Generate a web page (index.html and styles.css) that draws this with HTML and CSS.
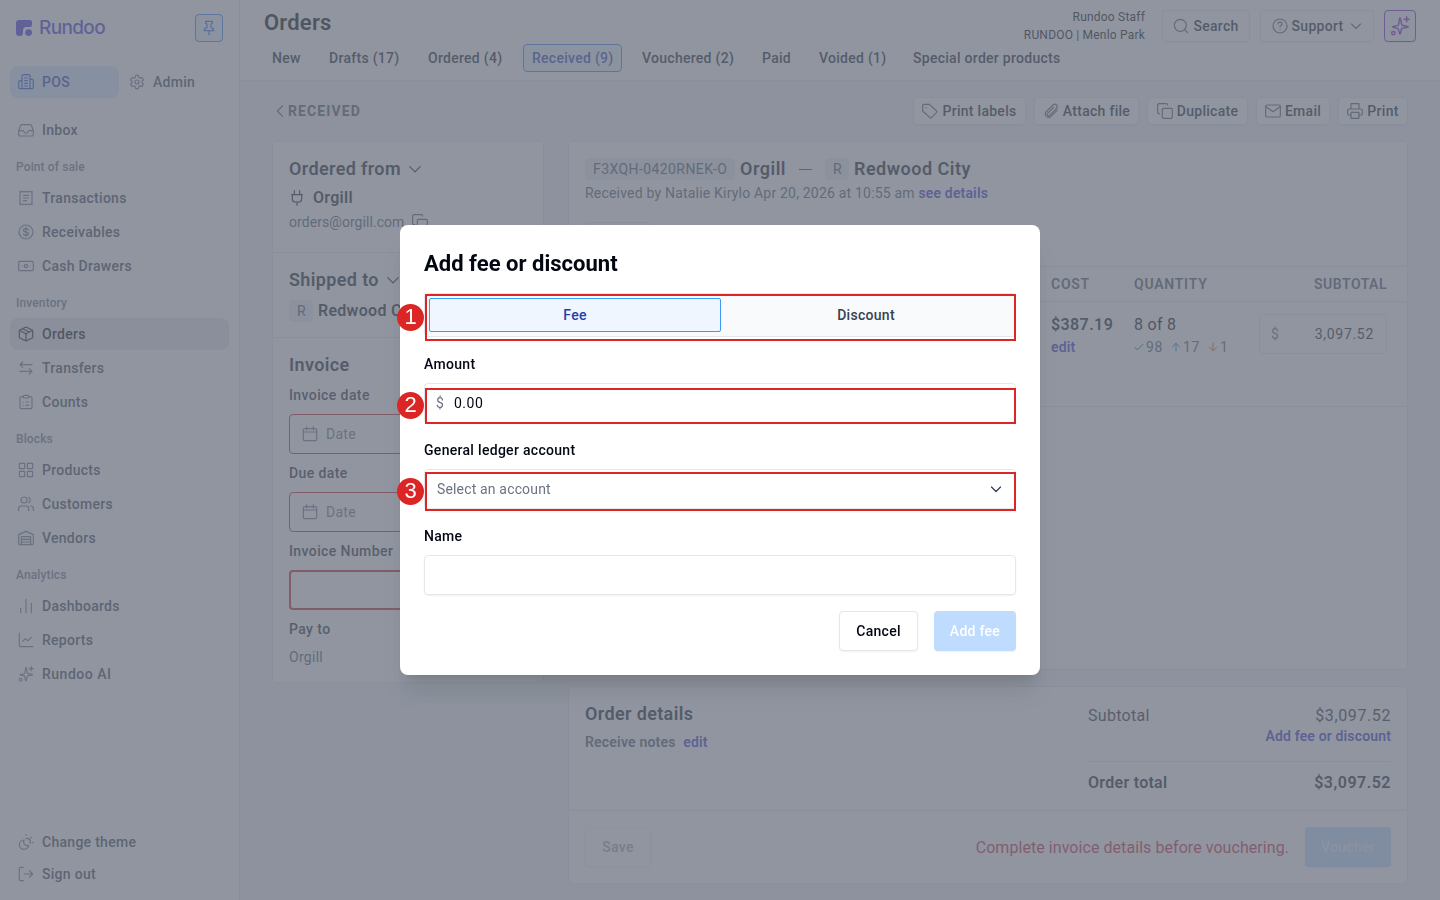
FILE: index.html
```html
<!DOCTYPE html>
<html lang="en">
<head>
  <meta charset="UTF-8" />
  <meta name="viewport" content="width=device-width, initial-scale=1.0"/>
  <title>Rundoo - Orders</title>
  <link rel="stylesheet" href="styles.css">
</head>
<body>

  <!-- Icon set -->
  <svg class="sprite" xmlns="http://www.w3.org/2000/svg">
    <symbol id="i-pin" viewBox="0 0 24 24"><path d="M7 2h10v3l-2 1v5l4 3v2H5v-2l4-3V6L7 5zM12 16v6"/></symbol>
    <symbol id="i-building" viewBox="0 0 24 24"><path d="M6 22V3a2 2 0 0 1 2-2h8a2 2 0 0 1 2 2v19M6 10H3a2 2 0 0 0-2 2v8a2 2 0 0 0 2 2h18a2 2 0 0 0 2-2V10a2 2 0 0 0-2-2h-3M10 6h4M10 10h4M10 14h4M10 18h4"/></symbol>
    <symbol id="i-gear" viewBox="0 0 24 24"><path d="M10 2h4l.7 3 2 1.200 3-.9 2 3.400-2.200 2.100v2.400l2.200 2.100-2 3.400-3-.9-2 1.200-.7 3h-4l-.7-3-2-1.200-3 .9-2-3.400 2.200-2.100v-2.400L2.300 8.700l2-3.400 3 .9 2-1.200z"/><circle cx="12" cy="12" r="3"/></symbol>
    <symbol id="i-inbox" viewBox="0 0 24 24"><path d="M1 13v6a2 2 0 0 0 2 2h18a2 2 0 0 0 2-2v-6l-3-8a2 2 0 0 0-2-1H6a2 2 0 0 0-2 1zM1 13h6c2 0 2 4 5 4s3-4 5-4h6"/></symbol>
    <symbol id="i-receipt" viewBox="0 0 24 24"><path d="M3 2l2 1 2-1 2.500 1L12 2l2.500 1L17 2l2 1 2-1v20l-2-1-2 1-2.500-1-2.500 1-2.500-1L7 22l-2-1-2 1zM8 8h8M8 12h8M8 16h5"/></symbol>
    <symbol id="i-dollar" viewBox="0 0 24 24"><circle cx="12" cy="12" r="10.500"/><path d="M16 9c-.5-1.300-1.700-2-4-2-5 0-5 5 0 5s5 5 0 5c-2.300 0-3.500-.7-4-2M12 5v14"/></symbol>
    <symbol id="i-cash" viewBox="0 0 24 24"><rect x="1" y="5" width="22" height="14" rx="2"/><circle cx="12" cy="12" r="2.500"/><path d="M6 12h.1M18 12h.1"/></symbol>
    <symbol id="i-box" viewBox="0 0 24 24"><path d="M12 1.500l10 5v11l-10 5-10-5v-11zM2 6.500l10 5 10-5M12 11.500v11M7 4l10 5"/></symbol>
    <symbol id="i-transfer" viewBox="0 0 24 24"><path d="M21 7H3l4-4M3 7l4 4M3 17h18l-4-4M21 17l-4 4"/></symbol>
    <symbol id="i-clipboard" viewBox="0 0 24 24"><path d="M8 4H5a2 2 0 0 0-2 2v14a2 2 0 0 0 2 2h14a2 2 0 0 0 2-2V6a2 2 0 0 0-2-2h-3M12 12h4M12 17h4M8 12h.1M8 17h.1"/><rect x="8" y="2" width="8" height="4" rx="1.500"/></symbol>
    <symbol id="i-grid" viewBox="0 0 24 24"><rect x="2" y="2" width="8" height="8" rx="1"/><rect x="14" y="2" width="8" height="8" rx="1"/><rect x="2" y="14" width="8" height="8" rx="1"/><rect x="14" y="14" width="8" height="8" rx="1"/></symbol>
    <symbol id="i-users" viewBox="0 0 24 24"><circle cx="9" cy="6" r="4.500"/><path d="M1 22v-3a4 4 0 0 1 4-4h7a4 4 0 0 1 4 4v3M16 2a4.500 4.500 0 0 1 0 8M19 15a4 4 0 0 1 4 4v3"/></symbol>
    <symbol id="i-warehouse" viewBox="0 0 24 24"><path d="M1 20V7l11-5 11 5v13a2 2 0 0 1-2 2H3a2 2 0 0 1-2-2zM5 22V11a1 1 0 0 1 1-1h12a1 1 0 0 1 1 1v11M5 14h14M5 18h14"/></symbol>
    <symbol id="i-bars" viewBox="0 0 24 24"><path d="M4 15v7M12 2v20M20 8v14"/></symbol>
    <symbol id="i-chart" viewBox="0 0 24 24"><path d="M2 2v18a2 2 0 0 0 2 2h18M7 14l4-4 4 3 5-5"/></symbol>
    <symbol id="i-spark" viewBox="0 0 24 24"><path d="M12 2c1 0 1.300 8 2.500 9s7.500 1 7.500 2-7 1-8 2-1 7-2 7-1.300-6-2.500-7-6.500-1-6.500-2 6-1 7-2 1-9 2-9zM20 1v6M17 4h6"/><circle cx="4" cy="20.500" r="2"/></symbol>
    <symbol id="i-theme" viewBox="0 0 24 24"><path d="M9 9a7 7 0 1 0 7 8c-5 2-9-3-7-8zM12 7a5 5 0 0 1 6 7M12 1v1M20 5l-1.500 1.500M22 13h1"/></symbol>
    <symbol id="i-signout" viewBox="0 0 24 24"><path d="M8 2H4a2 2 0 0 0-2 2v16a2 2 0 0 0 2 2h4M9 12h13l-5-5M22 12l-5 5"/></symbol>
    <symbol id="i-search" viewBox="0 0 24 24"><circle cx="11" cy="11" r="9"/><path d="M18 18l4 4"/></symbol>
    <symbol id="i-help" viewBox="0 0 24 24"><circle cx="12" cy="12" r="10.500"/><path d="M9 9c0-4 7-3.500 6 .5-.4 1.500-3 2-3 4M12 17h.1"/></symbol>
    <symbol id="i-down" viewBox="0 0 24 24"><path d="M3 8l9 9 9-9"/></symbol>
    <symbol id="i-left" viewBox="0 0 12 24"><path d="M10 4l-8 8 8 8"/></symbol>
    <symbol id="i-tag" viewBox="0 0 24 24"><path d="M1 4a2 2 0 0 1 2-2h8l11 10a2 2 0 0 1 0 2l-8 8a2 2 0 0 1-2 0L1 12zM6 7h.1"/></symbol>
    <symbol id="i-clip" viewBox="0 0 24 24"><path d="M21 11l-9.500 9.500a5 5 0 0 1-7-7L15 3a3.700 3.700 0 0 1 5.300 5.300L10 18.500a2 2 0 0 1-3-3l9-9"/></symbol>
    <symbol id="i-copy" viewBox="0 0 24 24"><rect x="8" y="8" width="15" height="15" rx="2"/><path d="M4 16H3a2 2 0 0 1-2-2V3a2 2 0 0 1 2-2h11a2 2 0 0 1 2 2"/></symbol>
    <symbol id="i-mail" viewBox="0 0 24 24"><rect x="1" y="3" width="22" height="18" rx="2"/><path d="M2 6l10 7 10-7"/></symbol>
    <symbol id="i-print" viewBox="0 0 24 24"><path d="M6 18H3a2 2 0 0 1-2-2v-5a2 2 0 0 1 2-2h18a2 2 0 0 1 2 2v5a2 2 0 0 1-2 2h-3M6 9V1h12v8"/><rect x="6" y="14" width="12" height="9" rx="1"/></symbol>
    <symbol id="i-plug" viewBox="0 0 24 24"><path d="M4 7h16M5 7v6a5 5 0 0 0 5 5h4a5 5 0 0 0 5-5V7M8 1v6M16 1v6M12 18v5"/></symbol>
    <symbol id="i-calendar" viewBox="0 0 24 24"><rect x="2" y="4" width="20" height="18" rx="2"/><path d="M2 9h20M7 1v5M17 1v5"/></symbol>
    <symbol id="i-check" viewBox="0 0 24 24"><path d="M2 13l6 6L22 5"/></symbol>
    <symbol id="i-up-arrow" viewBox="0 0 24 24"><path d="M12 22V3M3 12l9-9 9 9"/></symbol>
    <symbol id="i-down-arrow" viewBox="0 0 24 24"><path d="M12 2v19M3 12l9 9 9-9"/></symbol>
  </svg>

  <div class="app">
    <!-- Sidebar -->
    <aside class="sidebar">
      <div class="brand">
        <svg class="brand-mark" viewBox="0 0 16 16"><path d="M3 0h11a2 2 0 0 1 2 2v3a2 2 0 0 1-2 2h-3.500A3.500 3.500 0 0 0 7 10.500V13a3 3 0 0 1-3 3H3a3 3 0 0 1-3-3V3a3 3 0 0 1 3-3z"/><circle cx="12.600" cy="12.600" r="3.400"/></svg>
        <span class="brand-name">Rundoo</span>
        <button class="pin"><svg class="icon"><use href="#i-pin"/></svg></button>
      </div>
      <div class="switcher">
        <a class="nav-item pos"><svg class="icon"><use href="#i-building"/></svg>POS</a>
        <a class="nav-item admin"><svg class="icon"><use href="#i-gear"/></svg>Admin</a>
      </div>
      <nav class="nav">
        <a class="nav-item"><svg class="icon"><use href="#i-inbox"/></svg>Inbox</a>
        <h4>Point of sale</h4>
        <a class="nav-item"><svg class="icon"><use href="#i-receipt"/></svg>Transactions</a>
        <a class="nav-item"><svg class="icon"><use href="#i-dollar"/></svg>Receivables</a>
        <a class="nav-item"><svg class="icon"><use href="#i-cash"/></svg>Cash Drawers</a>
        <h4>Inventory</h4>
        <a class="nav-item active"><svg class="icon"><use href="#i-box"/></svg>Orders</a>
        <a class="nav-item"><svg class="icon"><use href="#i-transfer"/></svg>Transfers</a>
        <a class="nav-item"><svg class="icon"><use href="#i-clipboard"/></svg>Counts</a>
        <h4>Blocks</h4>
        <a class="nav-item"><svg class="icon"><use href="#i-grid"/></svg>Products</a>
        <a class="nav-item"><svg class="icon"><use href="#i-users"/></svg>Customers</a>
        <a class="nav-item"><svg class="icon"><use href="#i-warehouse"/></svg>Vendors</a>
        <h4>Analytics</h4>
        <a class="nav-item"><svg class="icon"><use href="#i-bars"/></svg>Dashboards</a>
        <a class="nav-item"><svg class="icon"><use href="#i-chart"/></svg>Reports</a>
        <a class="nav-item wide"><svg class="icon"><use href="#i-spark"/></svg>Rundoo AI</a>
      </nav>
      <div class="nav-bottom">
        <a class="nav-item"><svg class="icon"><use href="#i-theme"/></svg>Change theme</a>
        <a class="nav-item"><svg class="icon"><use href="#i-signout"/></svg>Sign out</a>
      </div>
    </aside>

    <div class="main">
      <!-- Top bar -->
      <header class="topbar">
        <div class="topbar-left">
          <h1>Orders</h1>
          <div class="tabs">
            <a>New</a>
            <a>Drafts (17)</a>
            <a>Ordered (4)</a>
            <a class="selected">Received (9)</a>
            <a>Vouchered (2)</a>
            <a>Paid</a>
            <a>Voided (1)</a>
            <a>Special order products</a>
          </div>
        </div>
        <div class="topbar-right">
          <div class="who">Rundoo Staff<br>RUNDOO | Menlo Park</div>
          <button class="btn search"><svg class="icon"><use href="#i-search"/></svg>Search</button>
          <button class="btn support"><svg class="icon"><use href="#i-help"/></svg>Support<svg class="icon caret"><use href="#i-down"/></svg></button>
          <button class="btn ai"><svg class="icon"><use href="#i-spark"/></svg></button>
        </div>
      </header>

      <!-- Page actions -->
      <div class="actions">
        <a class="back"><svg class="icon"><use href="#i-left"/></svg>RECEIVED</a>
        <button class="btn w-labels"><svg class="icon"><use href="#i-tag"/></svg>Print labels</button>
        <button class="btn w-attach"><svg class="icon"><use href="#i-clip"/></svg>Attach file</button>
        <button class="btn w-dup"><svg class="icon"><use href="#i-copy"/></svg>Duplicate</button>
        <button class="btn w-email"><svg class="icon"><use href="#i-mail"/></svg>Email</button>
        <button class="btn w-print"><svg class="icon"><use href="#i-print"/></svg>Print</button>
      </div>

      <div class="columns">
        <!-- Vendor and invoice -->
        <section class="card side">
          <div class="block from">
            <h2>Ordered from <svg class="icon"><use href="#i-down"/></svg></h2>
            <div class="vendor"><svg class="icon"><use href="#i-plug"/></svg>Orgill</div>
            <div class="email">orders@orgill.com <svg class="icon"><use href="#i-copy"/></svg></div>
          </div>
          <div class="block to">
            <h2>Shipped to <svg class="icon"><use href="#i-down"/></svg></h2>
            <div class="vendor"><span class="chip">R</span>Redwood City</div>
          </div>
          <div class="block invoice">
            <h2>Invoice</h2>
            <label>Invoice date</label>
            <div class="date"><svg class="icon"><use href="#i-calendar"/></svg>Date</div>
            <label>Due date</label>
            <div class="date"><svg class="icon"><use href="#i-calendar"/></svg>Date</div>
            <label>Invoice Number</label>
            <div class="date focus"></div>
            <label>Pay to</label>
            <p>Orgill</p>
          </div>
        </section>

        <div class="content">
          <!-- Order lines -->
          <section class="card lines">
            <div class="order-head">
              <div class="order-title">
                <span class="chip">F3XQH-0420RNEK-O</span>
                <h2>Orgill</h2>
                <span class="dash"></span>
                <span class="chip r">R</span>
                <h2>Redwood City</h2>
              </div>
              <p>Received by Natalie Kirylo Apr 20, 2026 at 10:55 am <a class="link">see details</a></p>
              <div class="filter"></div>
            </div>
            <div class="row row-head">
              <span>COST</span><span>QUANTITY</span><span class="right">SUBTOTAL</span>
            </div>
            <div class="row row-item">
              <div><strong>$387.19</strong><a class="link">edit</a></div>
              <div>
                <span class="qty">8 of 8</span>
                <div class="stock">
                  <span><svg class="icon green"><use href="#i-check"/></svg>98</span>
                  <span><svg class="icon blue"><use href="#i-up-arrow"/></svg>17</span>
                  <span><svg class="icon orange"><use href="#i-down-arrow"/></svg>1</span>
                </div>
              </div>
              <div class="money"><span>$</span>3,097.52</div>
            </div>
          </section>

          <!-- Totals -->
          <section class="card totals">
            <div class="totals-body">
              <div class="notes">
                <h2>Order details</h2>
                <p>Receive notes <a class="link">edit</a></p>
              </div>
              <div class="sums">
                <div class="sum"><span>Subtotal</span><span class="amount">$3,097.52</span></div>
                <a class="link">Add fee or discount</a>
                <div class="sum total"><span>Order total</span><span class="amount">$3,097.52</span></div>
              </div>
            </div>
            <div class="totals-foot">
              <button class="btn save">Save</button>
              <span class="warning">Complete invoice details before vouchering.</span>
              <button class="btn primary voucher">Voucher</button>
            </div>
          </section>
        </div>
      </div>
    </div>
  </div>

  <!-- Fee / discount dialog -->
  <div class="overlay">
    <div class="modal">
      <h3>Add fee or discount</h3>
      <div class="marked">
        <div class="segmented"><button class="on">Fee</button><button>Discount</button></div>
        <span class="outline outline-1"></span><span class="step step-1">1</span>
      </div>
      <label>Amount</label>
      <div class="marked">
        <div class="field"><span class="currency">$</span>0.00</div>
        <span class="outline outline-2"></span><span class="step step-2">2</span>
      </div>
      <label>General ledger account</label>
      <div class="marked">
        <div class="field select">Select an account <svg class="icon"><use href="#i-down"/></svg></div>
        <span class="outline outline-3"></span><span class="step step-3">3</span>
      </div>
      <label>Name</label>
      <div class="field"></div>
      <div class="modal-buttons">
        <button class="btn cancel">Cancel</button>
        <button class="btn primary add">Add fee</button>
      </div>
    </div>
  </div>
</body>
</html>
```

FILE: styles.css
```css
* {
  margin: 0;
  padding: 0;
  box-sizing: border-box;
}

body {
  font-family: Roboto, "Noto Sans", sans-serif;
  font-size: 14px;
  line-height: 20px;
  letter-spacing: 0.28px;
  color: #000;
  background: #f3f4f6;
  height: 100vh;
  overflow: hidden;
}

button {
  font: inherit;
  letter-spacing: inherit;
  color: inherit;
  background: none;
  border: none;
}

.sprite {
  display: none;
}

.icon {
  width: 16px;
  height: 16px;
  flex: none;
  fill: none;
  stroke: currentColor;
  stroke-width: 1.8;
  stroke-linecap: round;
  stroke-linejoin: round;
}

.app {
  display: flex;
  height: 100vh;
}

/* Sidebar */
.sidebar {
  width: 240px;
  flex: none;
  display: flex;
  flex-direction: column;
  padding: 14px 10px 10px;
  background: #fff;
  border-right: 1px solid #e5e7eb;
}
.brand {
  display: flex;
  align-items: center;
  padding: 0 6px;
  height: 28px;
}
.brand-mark {
  width: 16px;
  height: 16px;
  margin-right: 7px;
  fill: #4333e6;
}
.brand-name {
  font-family: Inter, sans-serif;
  font-size: 19px;
  font-weight: 500;
  letter-spacing: -0.65px;
  color: #4333e6;
}
.pin {
  display: flex;
  align-items: center;
  justify-content: center;
  width: 28px;
  height: 28px;
  margin-left: auto;
  border: 1px solid #3b82f6;
  border-radius: 4px;
  background: #eff6ff;
  color: #2563eb;
}
.switcher {
  display: flex;
  margin: 24px 0 16px;
}
.nav-item {
  display: flex;
  align-items: center;
  gap: 8px;
  height: 32px;
  padding-left: 8px;
  border-radius: 8px;
  font-weight: 500;
  color: #374151;
}
.nav-item .icon {
  color: #6b7280;
}
.wide {
  letter-spacing: 0.5px;
}
.pos {
  width: 109px;
  background: #dbeafe;
  color: #1e40af;
}
.pos .icon {
  color: #1d4ed8;
}
.admin {
  padding-left: 10px;
}
.nav {
  display: flex;
  flex-direction: column;
}
.nav .nav-item + .nav-item {
  margin-top: 2px;
}
.nav h4 {
  height: 36px;
  padding: 5px 6px 0;
  font-size: 12px;
  line-height: 32px;
  font-weight: 500;
  letter-spacing: 0.12px;
  color: #6b7280;
}
.nav .active {
  width: 219px;
  background: #e5e7eb;
  color: #030712;
}
.nav .active .icon {
  color: #111827;
}
.nav-bottom {
  margin-top: auto;
}

/* Top bar */
.main {
  flex: 1;
  min-width: 0;
}
.topbar {
  display: flex;
  justify-content: space-between;
  height: 81px;
  padding: 0 24px 0 23px;
  background: #fff;
  border-bottom: 1px solid #e5e7eb;
}
.topbar h1 {
  height: 44px;
  padding-left: 1px;
  font-size: 22px;
  line-height: 45px;
  font-weight: 600;
  letter-spacing: 0.2px;
}
.topbar-left {
  width: 740px;
}
.tabs {
  display: grid;
  grid-template-columns: 46px 88px 93px 99px 109px 46px 83px 168px;
  gap: 11px;
}
.tabs a {
  height: 28px;
  padding: 0 8px;
  line-height: 26px;
  border: 1px solid transparent;
  border-radius: 4px;
  font-weight: 500;
  white-space: nowrap;
  color: #111827;
}
.tabs .selected {
  border-color: #3b82f6;
  background: #eff6ff;
  color: #1e40af;
}
.topbar-right {
  display: flex;
  gap: 10px;
  padding-top: 10px;
}
.who {
  margin: -2px 7px 0 0;
  font-size: 12px;
  line-height: 18px;
  letter-spacing: 0.2px;
  text-align: right;
  white-space: nowrap;
}

.btn {
  display: flex;
  align-items: center;
  justify-content: center;
  gap: 4px;
  height: 32px;
  border: 1px solid #e5e7eb;
  border-radius: 4px;
  background: #fff;
  font-weight: 500;
  white-space: nowrap;
  color: #111827;
  box-shadow: 0 1px 2px rgba(0, 0, 0, 0.06);
}
.btn .icon {
  color: #4b5563;
}
.search {
  width: 88px;
}
.support {
  width: 114px;
}
.support .caret {
  width: 12px;
  height: 12px;
  margin-left: 3px;
  stroke-width: 2.2;
}
.ai {
  width: 32px;
  border-color: #7e22ce;
  background: #faf5ff;
}
.ai .icon {
  width: 20px;
  height: 20px;
  color: #7e22ce;
}

/* Page actions */
.actions {
  display: flex;
  gap: 8px;
  padding: 16px 32px;
}
.actions .btn {
  height: 28px;
}
.back {
  display: flex;
  align-items: center;
  gap: 4px;
  margin-right: auto;
  padding-left: 4px;
  font-weight: 700;
  letter-spacing: 1.1px;
  color: #4b5563;
}
.back .icon {
  width: 8px;
}
.w-labels {
  width: 113px;
}
.w-attach {
  width: 105px;
}
.w-dup {
  width: 101px;
}
.w-email {
  width: 74px;
}
.w-print {
  width: 70px;
}

/* Cards */
.columns {
  display: flex;
  align-items: flex-start;
  gap: 24px;
  padding: 0 32px;
}
.card {
  background: #fff;
  border: 1px solid #e5e7eb;
  border-radius: 4px;
}
.card h2 {
  display: flex;
  align-items: center;
  gap: 7px;
  font-size: 18px;
  line-height: 24px;
  font-weight: 600;
  letter-spacing: 0.36px;
  color: #111827;
}
.card h2 .icon {
  width: 14px;
  height: 14px;
  stroke-width: 2.2;
}
.link {
  font-weight: 600;
  letter-spacing: 0.15px;
  color: #3436cc;
}
.chip {
  height: 22px;
  padding: 0 8px;
  border-radius: 4px;
  background: #eceef3;
  font-size: 14px;
  line-height: 22px;
  font-weight: 400;
  color: #4b5563;
}
.side {
  width: 272px;
  height: 542px;
}
.block {
  padding: 15px 16px 0;
  border-bottom: 1px solid #e5e7eb;
}
.block:last-child {
  border: none;
}
.from {
  height: 111px;
}
.to {
  height: 85px;
}
.vendor {
  display: flex;
  align-items: center;
  gap: 8px;
  margin-top: 5px;
  height: 24px;
  font-size: 16px;
  font-weight: 600;
  white-space: nowrap;
  color: #111827;
}
.to .vendor {
  gap: 5px;
  margin-top: 7px;
}
.to .chip {
  width: 24px;
}
.email {
  display: flex;
  align-items: center;
  gap: 8px;
  height: 24px;
  letter-spacing: 0.06px;
  color: #4b5563;
}
.invoice label {
  display: block;
  height: 20px;
  margin: 9px 0;
  font-weight: 500;
  letter-spacing: 0.4px;
  color: #1f2937;
}
.invoice h2 + label {
  margin-top: 8px;
}
.date {
  display: flex;
  align-items: center;
  gap: 8px;
  height: 40px;
  padding: 0 12px;
  border: 1px solid #c81e2b;
  border-radius: 4px;
  color: #6b7280;
}
.focus {
  border-width: 2px;
}
.invoice p {
  margin-top: -1px;
  color: #4b5563;
}

.content {
  flex: 1;
}
.lines {
  height: 529px;
}
.order-head {
  height: 124px;
  padding: 15px 16px 0;
}
.order-title {
  display: flex;
  align-items: center;
  height: 24px;
}
.order-title .chip {
  width: 150px;
  margin-right: 5px;
  letter-spacing: 0.42px;
  white-space: nowrap;
}
.order-title .r {
  width: 24px;
}
.order-title h2 {
  letter-spacing: 0.5px;
}
.dash {
  width: 13px;
  height: 1px;
  margin: 0 13px;
  background: #374151;
}
.order-head p {
  margin-top: 2px;
  letter-spacing: 0.2px;
  color: #4b5563;
}
.filter {
  width: 65px;
  height: 28px;
  margin-top: 19px;
  border: 1px solid #e5e7eb;
  border-radius: 4px;
}
.row {
  display: grid;
  grid-template-columns: 83px 125px 128px;
  justify-content: end;
  padding-right: 20px;
  border-top: 1px solid #e5e7eb;
}
.row-head {
  height: 35px;
  line-height: 35px;
  font-weight: 600;
  letter-spacing: 0.75px;
  color: #4b5563;
}
.right {
  letter-spacing: 0.5px;
  text-align: right;
}
.row-item {
  height: 106px;
  padding-top: 12px;
  border-bottom: 1px solid #e5e7eb;
}
.row-item strong {
  display: block;
  font-size: 16px;
  font-weight: 600;
  line-height: 22px;
  letter-spacing: 0.4px;
  color: #111827;
}
.row-item .link {
  display: block;
  line-height: 22px;
}
.qty {
  font-size: 16px;
  line-height: 22px;
}
.stock {
  display: flex;
  gap: 8px;
  line-height: 22px;
  letter-spacing: 0.6px;
  color: #4b5563;
}
.stock span {
  display: flex;
  align-items: center;
  gap: 2px;
}
.stock .icon {
  width: 10px;
  height: 10px;
  stroke-width: 2.4;
}
.stock .green {
  color: #047857;
}
.stock .blue {
  color: #0284c7;
}
.stock .orange {
  color: #ea580c;
}
.money {
  display: flex;
  justify-content: space-between;
  height: 40px;
  padding: 0 12px 0 11px;
  line-height: 38px;
  letter-spacing: 0.7px;
  border: 1px solid #e5e7eb;
  border-radius: 4px;
  color: #111827;
}
.money span {
  color: #6b7280;
}

/* Totals */
.totals {
  height: 198px;
  margin-top: 16px;
}
.totals-body {
  display: flex;
  justify-content: space-between;
  height: 124px;
  padding: 15px 16px 0;
  border-bottom: 1px solid #e5e7eb;
}
.notes p {
  margin-top: 6px;
  font-weight: 600;
  letter-spacing: 0.2px;
  color: #4b5563;
}
.notes .link {
  margin-left: 4px;
}
.sums {
  width: 303px;
  display: flex;
  flex-direction: column;
}
.sums > .link {
  align-self: flex-end;
  line-height: 14px;
}
.sum {
  display: flex;
  justify-content: space-between;
  font-size: 16px;
  line-height: 27px;
  color: #1f2937;
}
.amount {
  letter-spacing: 0.6px;
}
.total {
  margin-top: 18px;
  padding-top: 7px;
  border-top: 1px solid #e5e7eb;
  font-weight: 600;
  color: #111827;
}
.total .amount {
  letter-spacing: 0.5px;
}
.totals-foot {
  display: flex;
  align-items: center;
  height: 72px;
  padding: 0 16px;
}
.totals-foot .btn {
  height: 40px;
}
.totals-foot .save {
  width: 66px;
  margin-right: auto;
  border-color: #f3f4f6;
  color: #9ca3af;
}
.warning {
  margin-right: 16px;
  padding-top: 2px;
  font-size: 16px;
  letter-spacing: 0.06px;
  color: #c81e3a;
}
.btn.primary {
  border: none;
  background: #bfdbfe;
  color: #fff;
}
.btn.voucher {
  width: 86px;
  color: #eaf2fe;
}

/* Dialog */
.overlay {
  position: fixed;
  inset: 0;
  display: flex;
  align-items: center;
  justify-content: center;
  background: rgba(107, 114, 128, 0.75);
}
.modal {
  width: 640px;
  height: 450px;
  padding: 24px;
  border-radius: 8px;
  background: #fff;
  box-shadow: 0 20px 25px -5px rgba(0, 0, 0, 0.1), 0 8px 10px -6px rgba(0, 0, 0, 0.1);
}
.modal h3 {
  height: 28px;
  margin-bottom: 16px;
  font-size: 22px;
  line-height: 30px;
  font-weight: 700;
  letter-spacing: 0.02px;
  color: #030712;
}
.modal label {
  display: block;
  height: 20px;
  margin: 17px 0 9px;
  font-weight: 500;
  letter-spacing: 0.3px;
  color: #030712;
}
.marked {
  position: relative;
}
.segmented {
  display: flex;
  height: 44px;
  padding: 4px;
  border: 1px solid #e5e7eb;
  border-radius: 4px;
  background: #f9fafb;
}
.segmented button {
  flex: 1;
  border-radius: 2px;
  font-weight: 500;
  color: #374151;
}
.segmented .on {
  border: 1px solid #3b9bf6;
  background: #eff6ff;
  color: #1e40af;
}
.field {
  display: flex;
  align-items: center;
  height: 40px;
  padding: 0 11px;
  border: 1px solid #e5e7eb;
  border-radius: 4px;
  background: #fff;
  letter-spacing: 0.5px;
  color: #030712;
  box-shadow: 0 1px 2px rgba(0, 0, 0, 0.06);
}
.currency {
  width: 18px;
  color: #6b7280;
}
.select {
  justify-content: space-between;
  padding-left: 12px;
  letter-spacing: 0.16px;
  color: #6b7280;
}
.select .icon {
  width: 12px;
  height: 12px;
  margin-right: 2px;
  stroke-width: 2.6;
  color: #374151;
}
.modal-buttons {
  display: flex;
  justify-content: flex-end;
  gap: 16px;
  margin-top: 16px;
}
.modal-buttons .btn {
  height: 40px;
}
.modal-buttons .cancel {
  width: 79px;
  color: #030712;
}
.modal-buttons .add {
  width: 82px;
}

/* Numbered markers */
.outline {
  position: absolute;
  left: 1px;
  right: 0;
  border: 2px solid #dc2626;
}
.outline-1 {
  top: 1px;
  height: 47px;
}
.outline-2 {
  top: 5px;
  height: 36px;
}
.outline-3 {
  top: 3px;
  height: 39px;
}
.step {
  position: absolute;
  left: -27px;
  width: 27px;
  height: 27px;
  border-radius: 50%;
  background: #dc2626;
  font-family: "Liberation Sans", sans-serif;
  font-size: 22px;
  line-height: 26px;
  letter-spacing: 0;
  text-align: center;
  color: #fff;
}
.step-1 {
  top: 11px;
}
.step-2 {
  top: 9px;
}
.step-3 {
  top: 9px;
}
```
